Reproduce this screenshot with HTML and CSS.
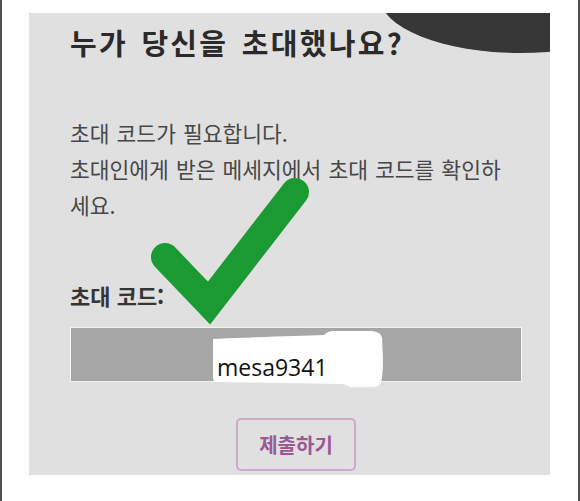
FILE: index.html
```html
<!DOCTYPE html>
<html lang="ko">
<head>
<meta charset="utf-8">
<title>초대 코드</title>
<link rel="stylesheet" href="styles.css">
</head>
<body>
<div class="frame">
  <main class="card">
    <div class="blob-dark"></div>
    <h1 class="title">누가 당신을 초대했나요?</h1>
    <p class="desc">초대 코드가 필요합니다.<br>초대인에게 받은 메세지에서 초대 코드를 확인하세요.</p>
    <label class="label">초대 코드:</label>
    <div class="field">
      <svg class="paint" width="172" height="60" viewBox="0 0 172 60" aria-hidden="true">
        <path d="M2 10 C40 8 90 7 113 6 C116 3 118 2 122 2 L158 2 C166 2 170 4 171 9 L172 30 C172 42 171 50 170 54 C168 58 164 58 160 58 L140 58 C136 57 134 55 130 55 L6 53 C3 53 2 51 2 48 Z" fill="#ffffff"/>
      </svg>
      <span class="code">mesa9341</span>
    </div>
    <div class="actions">
      <button class="submit">제출하기</button>
    </div>
    <svg class="check" width="160" height="152" viewBox="0 0 160 152" aria-hidden="true">
      <polyline points="15,79 59,125 145,14" fill="none" stroke="#1b9a33" stroke-width="28" stroke-linecap="round" stroke-linejoin="miter"/>
    </svg>
  </main>
</div>
</body>
</html>
```
FILE: styles.css
```css
html, body {
  margin: 0;
  padding: 0;
  background: #ffffff;
}
.frame {
  box-sizing: border-box;
  width: 580px;
  height: 501px;
  border-left: 2px solid #4f4f4f;
  border-right: 2px solid #4f4f4f;
  padding: 13px 28px 0 27px;
}
.card {
  position: relative;
  overflow: hidden;
  box-sizing: border-box;
  height: 462px;
  background: #e0e0e0;
  padding: 13px 28px 3px 41px;
  display: flex;
  flex-direction: column;
  font-family: "Noto Sans CJK KR", "Noto Sans", sans-serif;
}
.blob-dark {
  position: absolute;
  left: 351px;
  top: -72px;
  width: 280px;
  height: 112px;
  border-radius: 50%;
  background: #373737;
}
.title {
  position: relative;
  margin: 0;
  font-size: 29px;
  line-height: 32px;
  font-weight: 700;
  color: #2a2a2a;
  letter-spacing: 2.3px;
  word-spacing: 3px;
}
.desc {
  margin: 57px 0 0 0;
  max-width: 440px;
  font-size: 21.5px;
  line-height: 36px;
  color: #474747;
  word-spacing: 1px;
}
.label {
  margin-top: 57px;
  font-size: 22px;
  line-height: 30px;
  font-weight: 700;
  color: #353535;
}
.field {
  position: relative;
  margin-top: 17px;
  height: 55px;
  box-sizing: border-box;
  background: #a6a6a6;
  border: 1px solid #f3f3f3;
}
.paint {
  position: absolute;
  left: 140px;
  top: 1px;
  overflow: visible;
}
.code {
  position: absolute;
  left: 146px;
  top: 24px;
  font-family: "Open Sans", "Noto Sans", sans-serif;
  font-size: 23px;
  line-height: 30px;
  color: #111111;
}
.actions {
  display: flex;
  justify-content: center;
  margin-top: 36px;
}
.submit {
  width: 120px;
  height: 53px;
  box-sizing: border-box;
  background: transparent;
  border: 2px solid #cfa9cc;
  border-radius: 5px;
  font-family: "Noto Sans CJK KR", sans-serif;
  font-size: 20px;
  font-weight: 700;
  color: #9a5894;
  padding: 0;
}
.check {
  position: absolute;
  left: 121px;
  top: 165px;
  overflow: visible;
}
```
